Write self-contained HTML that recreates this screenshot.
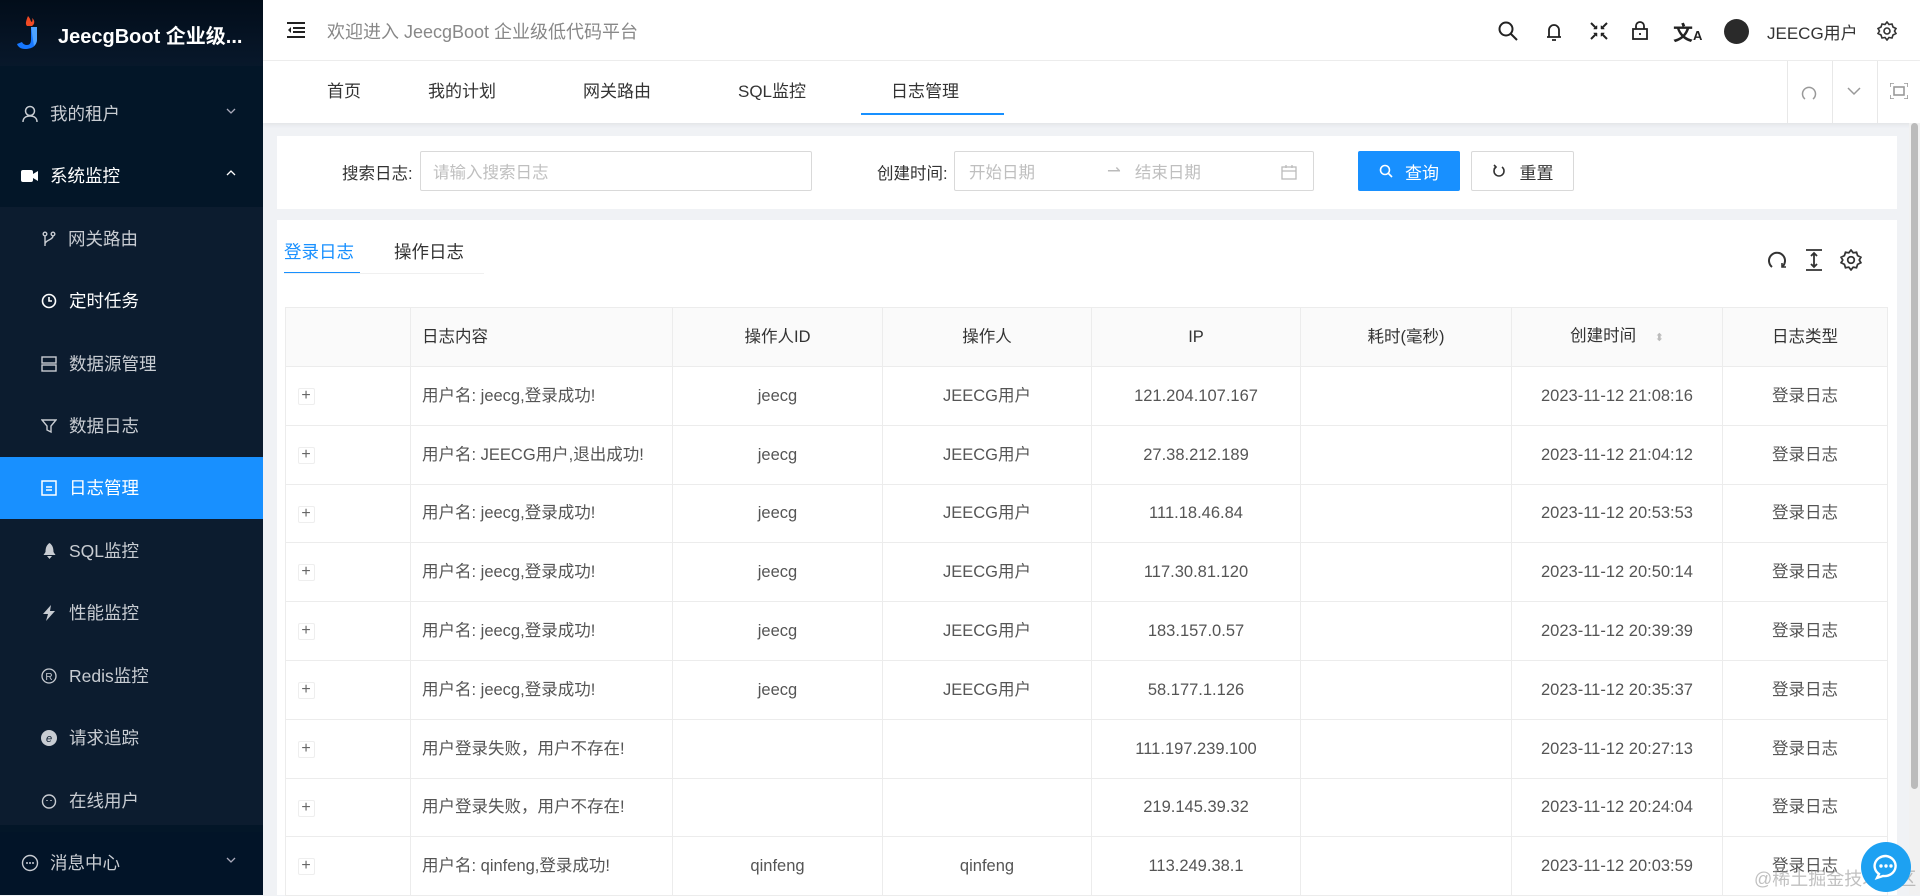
<!DOCTYPE html>
<html><head><meta charset="utf-8">
<style>
*{box-sizing:border-box;margin:0;padding:0}
body{width:1920px;height:895px;overflow:hidden;background:#f0f2f5;font-family:"Liberation Sans","Noto Sans CJK SC",sans-serif;font-size:17px;color:#333;position:relative}
.abs{position:absolute}
#side{left:0;top:0;width:263px;height:895px;background:#031628}
.logo{left:0;top:0;width:263px;height:66px;background:linear-gradient(#020d1a,#08182b)}
.mi{position:absolute;left:0;width:263px;height:62px;display:flex;align-items:center;color:#c8ccd2;font-size:17.5px;line-height:22px}
.mi svg{flex:none}
.sub{background:#0c1c2f}
.mi.act{background:#1890ff;color:#fff}
.chev{position:absolute;right:26px;top:22px}
#hdr{left:263px;top:0;width:1657px;height:61px;background:#fff;border-bottom:1px solid #eee}
#tabs{left:263px;top:61px;width:1657px;height:62px;background:#fff;box-shadow:0 2px 4px rgba(0,0,0,.06)}
.tab{position:absolute;top:20px;font-size:17px;color:#333;line-height:22px}
.card{background:#fff;position:absolute}
.inp{position:absolute;border:1px solid #d9d9d9;border-radius:2px;background:#fff;color:#bfbfbf;font-size:16.5px;display:flex;align-items:center}
table{border-collapse:collapse;position:absolute;left:285px;top:307px;width:1602px;table-layout:fixed}
td,th{border:1px solid #ececec;height:58.8px;text-align:center;font-size:16.5px;color:#555;font-weight:normal;line-height:24px;vertical-align:middle}
th{background:#fafafa;color:#333;height:59px}
td.l,th.l{text-align:left;padding-left:11px}
.plus{display:inline-block;width:17px;height:17px;border:1px solid #eee;border-radius:2px;line-height:14px;font-size:16px;color:#666;text-align:center;margin-left:-84px;vertical-align:middle}
</style></head><body>
<div id="side" class="abs">
 <div class="abs logo">
  <svg class="abs" style="left:16px;top:14px" width="24" height="36" viewBox="0 0 24 36"><path d="M12 2c3 3 2 5 4 6 1-2 0-4 0-4 3 2 3 6 0 8h-5c-2-2-1-5 1-10z" fill="#f04a24"/><path d="M15 13h6v12c0 7-5 10-12 10-4 0-7-2-8-5l5-2c1 2 3 3 5 3 3 0 4-2 4-6z" fill="#1677ff"/><path d="M15 13h6v12c0 3-1 5-3 7z" fill="#4ea3ff"/></svg>
  <div class="abs" style="left:58px;top:20px;color:#fff;font-size:20px;font-weight:bold;white-space:nowrap">JeecgBoot 企业级...</div>
 </div>
 <div class="mi" style="top:83px"><svg style="margin-left:22px" width="16" height="18" viewBox="0 0 16 18" fill="none" stroke="#c8ccd2" stroke-width="1.5"><circle cx="8" cy="6" r="4.5"/><path d="M1 17c0-4 3-6 7-6s7 2 7 6"/></svg><span style="margin-left:12px">我的租户</span><svg class="chev" width="12" height="12" viewBox="0 0 12 12"><path d="M2 4l4 4 4-4" fill="none" stroke="#aab" stroke-width="1.3"/></svg></div>
 <div class="mi" style="top:145px;color:#fff"><svg style="margin-left:21px" width="18" height="16" viewBox="0 0 18 16"><rect x="0" y="2" width="12" height="12" rx="2" fill="#fff"/><path d="M12 6l5-3v10l-5-3z" fill="#fff"/></svg><span style="margin-left:11px">系统监控</span><svg class="chev" width="12" height="12" viewBox="0 0 12 12"><path d="M2 8l4-4 4 4" fill="none" stroke="#fff" stroke-width="1.3"/></svg></div>
 <div class="abs sub" style="left:0;top:207px;width:263px;height:618px"></div>
 <div class="mi" style="top:208px"><svg style="margin-left:42px" width="14" height="16" viewBox="0 0 14 16" fill="none" stroke="#c8ccd2" stroke-width="1.4"><circle cx="3" cy="3" r="1.8"/><circle cx="11" cy="3" r="1.8"/><path d="M3 5v10M11 5c0 4-8 4-8 8"/></svg><span style="margin-left:12px">网关路由</span></div>
 <div class="mi" style="top:270px;color:#fff"><svg style="margin-left:41px" width="16" height="16" viewBox="0 0 16 16" fill="none" stroke="#fff" stroke-width="1.6"><circle cx="8" cy="8" r="6.5"/><path d="M8 4v4h3"/></svg><span style="margin-left:12px">定时任务</span></div>
 <div class="mi" style="top:333px"><svg style="margin-left:41px" width="16" height="16" viewBox="0 0 16 16" fill="none" stroke="#c8ccd2" stroke-width="1.4"><rect x="1" y="1" width="14" height="6"/><rect x="1" y="9" width="14" height="6"/></svg><span style="margin-left:12px">数据源管理</span></div>
 <div class="mi" style="top:395px"><svg style="margin-left:41px" width="16" height="16" viewBox="0 0 16 16" fill="none" stroke="#c8ccd2" stroke-width="1.4"><path d="M1 2h14l-5 6v6l-4-2V8z"/></svg><span style="margin-left:12px">数据日志</span></div>
 <div class="mi act" style="top:457px"><svg style="margin-left:41px" width="16" height="16" viewBox="0 0 16 16" fill="none" stroke="#fff" stroke-width="1.5"><rect x="1" y="1" width="14" height="14"/><path d="M5 7h6M5 10h6"/></svg><span style="margin-left:12px">日志管理</span></div>
 <div class="mi" style="top:520px"><svg style="margin-left:42px" width="15" height="16" viewBox="0 0 15 16"><path d="M7.5 0c3 2 4 5 4 9l2 3H1.5l2-3c0-4 1-7 4-9z M5 13h5l-2.5 3z" fill="#c8ccd2"/></svg><span style="margin-left:12px">SQL监控</span></div>
 <div class="mi" style="top:582px"><svg style="margin-left:42px" width="14" height="16" viewBox="0 0 14 16"><path d="M9 0L1 9h5l-2 7 9-10H8z" fill="#c8ccd2"/></svg><span style="margin-left:13px">性能监控</span></div>
 <div class="mi" style="top:645px"><svg style="margin-left:41px" width="16" height="16" viewBox="0 0 16 16"><circle cx="8" cy="8" r="7" fill="none" stroke="#c8ccd2" stroke-width="1.3"/><text x="8" y="12" font-size="10" text-anchor="middle" fill="#c8ccd2" font-family="Liberation Sans">R</text></svg><span style="margin-left:12px">Redis监控</span></div>
 <div class="mi" style="top:707px"><svg style="margin-left:41px" width="16" height="16" viewBox="0 0 16 16"><circle cx="8" cy="8" r="8" fill="#c8ccd2"/><text x="8" y="12" font-size="11" text-anchor="middle" fill="#0c1c2f" font-style="italic" font-family="Liberation Sans">e</text></svg><span style="margin-left:12px">请求追踪</span></div>
 <div class="mi" style="top:770px"><svg style="margin-left:41px" width="16" height="16" viewBox="0 0 16 16" fill="none" stroke="#c8ccd2" stroke-width="1.4"><circle cx="8" cy="8.5" r="6.5"/><path d="M6 7v1M10 7v1"/></svg><span style="margin-left:12px">在线用户</span></div>
 <div class="mi" style="top:832px;background:#021428"><svg style="margin-left:21px" width="18" height="18" viewBox="0 0 18 18"><circle cx="9" cy="9" r="7.5" fill="none" stroke="#c8ccd2" stroke-width="1.4"/><circle cx="6" cy="9" r="1" fill="#c8ccd2"/><circle cx="9" cy="9" r="1" fill="#c8ccd2"/><circle cx="12" cy="9" r="1" fill="#c8ccd2"/></svg><span style="margin-left:11px">消息中心</span><svg class="chev" width="12" height="12" viewBox="0 0 12 12"><path d="M2 4l4 4 4-4" fill="none" stroke="#aab" stroke-width="1.3"/></svg></div>
</div>

<div id="hdr" class="abs">
 <svg class="abs" style="left:24px;top:22px" width="18" height="16" viewBox="0 0 18 16" stroke="#222" stroke-width="2"><path d="M0 1h18M6 6h12M6 10h12M0 15h18"/><path d="M4 5l-3 3 3 3z" fill="#222" stroke="none"/></svg>
 <div class="abs" style="left:64px;top:18px;font-size:18px;color:#888">欢迎进入 JeecgBoot 企业级低代码平台</div>
 <svg class="abs" style="left:1235px;top:21px" width="20" height="20" viewBox="0 0 20 20" fill="none" stroke="#222" stroke-width="2"><circle cx="8" cy="8" r="6.5"/><path d="M13 13l6 6"/></svg>
 <svg class="abs" style="left:1283px;top:22px" width="16" height="20" viewBox="0 0 16 20" fill="none" stroke="#222" stroke-width="1.8"><path d="M3 15V8a5 5 0 0110 0v7zM1 15h14M6 18h4"/></svg>
 <svg class="abs" style="left:1327px;top:22px" width="18" height="18" viewBox="0 0 18 18" fill="#222" stroke="#222" stroke-width="2"><path d="M1 1l5 5M17 1l-5 5M1 17l5-5M17 17l-5-5" fill="none"/><path d="M7 7H3.5L7 3.5zM11 7h3.5L11 3.5zM7 11H3.5L7 14.5zM11 11h3.5L11 14.5z" stroke-width="0.5"/></svg>
 <svg class="abs" style="left:1369px;top:21px" width="16" height="19" viewBox="0 0 16 19" fill="none" stroke="#222" stroke-width="1.8"><rect x="1" y="8" width="14" height="10"/><path d="M4 8V5a4 4 0 018 0v3M8 12v2"/></svg>
 <div class="abs" style="left:1410px;top:17px;font-size:20px;font-weight:bold;color:#222">文<span style="font-size:13px">A</span></div>
 <div class="abs" style="left:1461px;top:19px;width:25px;height:25px;border-radius:50%;background:#2a2a2a"></div>
 <div class="abs" style="left:1504px;top:19px;font-size:17px;color:#333">JEECG用户</div>
 <svg class="abs" style="left:1614px;top:21px" width="20" height="20" viewBox="0 0 20 20" fill="none" stroke="#333" stroke-width="1.6"><circle cx="10" cy="10" r="3"/><path d="M10 1l2 2.5 3-.5 1 3 3 1.5-1.5 2.5 1.5 2.5-3 1.5-1 3-3-.5L10 19l-2-2.5-3 .5-1-3-3-1.5L2.5 10 1 7.5 4 6l1-3 3 .5z"/></svg>
</div>

<div id="tabs" class="abs">
 <div class="tab" style="left:64px">首页</div>
 <div class="tab" style="left:165px">我的计划</div>
 <div class="tab" style="left:320px">网关路由</div>
 <div class="tab" style="left:475px">SQL监控</div>
 <div class="tab" style="left:628px">日志管理</div>
 <div class="abs" style="left:598px;top:52px;width:143px;height:2px;background:#1890ff"></div>
 <div class="abs" style="left:1524px;top:0;width:1px;height:62px;background:#e8e8e8"></div>
 <div class="abs" style="left:1569px;top:0;width:1px;height:62px;background:#e8e8e8"></div>
 <div class="abs" style="left:1614px;top:0;width:1px;height:62px;background:#e8e8e8"></div>
 <svg class="abs" style="left:1538px;top:24px" width="16" height="16" viewBox="0 0 16 16" fill="none" stroke="#999" stroke-width="1.5"><path d="M4 14A6.5 6.5 0 1112 14"/></svg>
 <svg class="abs" style="left:1584px;top:25px" width="14" height="10" viewBox="0 0 14 10" fill="none" stroke="#999" stroke-width="1.5"><path d="M1 2l6 6 6-6"/></svg>
 <svg class="abs" style="left:1627px;top:22px" width="18" height="16" viewBox="0 0 18 16" fill="none" stroke="#999" stroke-width="1.6"><rect x="4" y="4" width="10" height="8"/><path d="M0 4V0h4M14 0h4v4M18 12v4h-4M4 16H0v-4"/></svg>
</div>
<div class="abs" style="left:1909px;top:123px;width:11px;height:772px;background:#f1f1f1"></div>
<div class="abs" style="left:1911px;top:123px;width:7px;height:666px;background:#bbb;border-radius:4px"></div>

<div class="card" style="left:277px;top:136px;width:1620px;height:73px">
 <div class="abs" style="left:65px;top:24px;font-size:16.5px">搜索日志:</div>
 <div class="inp" style="left:143px;top:15px;width:392px;height:40px;padding-left:12px">请输入搜索日志</div>
 <div class="abs" style="left:600px;top:24px;font-size:16.5px">创建时间:</div>
 <div class="inp" style="left:677px;top:15px;width:360px;height:40px;padding-left:14px">开始日期<span style="margin-left:72px;color:#bbb">⇀</span><span style="margin-left:14px">结束日期</span>
  <svg style="position:absolute;right:16px;top:12px" width="16" height="16" viewBox="0 0 16 16" fill="none" stroke="#bbb" stroke-width="1.3"><rect x="1" y="3" width="14" height="12"/><path d="M1 7h14M5 1v3M11 1v3"/></svg></div>
 <div class="abs" style="left:1081px;top:15px;width:102px;height:40px;background:#1890ff;border-radius:2px;color:#fff;font-size:17px;display:flex;align-items:center;justify-content:center"><svg width="14" height="14" viewBox="0 0 14 14" fill="none" stroke="#fff" stroke-width="1.6"><circle cx="6" cy="6" r="4.5"/><path d="M9.5 9.5l3.5 3.5"/></svg><span style="margin-left:12px">查询</span></div>
 <div class="abs" style="left:1194px;top:15px;width:103px;height:40px;border:1px solid #d9d9d9;border-radius:2px;font-size:17px;display:flex;align-items:center;justify-content:center"><svg width="14" height="14" viewBox="0 0 14 14" fill="none" stroke="#333" stroke-width="1.6"><path d="M4 3A5 5 0 1010 3"/><path d="M2 1l2 2-2 2" /></svg><span style="margin-left:14px">重置</span></div>
</div>

<div class="card" style="left:277px;top:220px;width:1620px;height:675px">
 <div class="abs" style="left:7px;top:19px;color:#1890ff;font-size:17.5px">登录日志</div>
 <div class="abs" style="left:117px;top:19px;color:#333;font-size:17.5px">操作日志</div>
 <div class="abs" style="left:7px;top:52px;width:76px;height:2px;background:#1890ff"></div>
 <div class="abs" style="left:7px;top:53px;width:200px;height:1px;background:#f0f0f0"></div>
 <svg class="abs" style="left:1490px;top:30px" width="20" height="20" viewBox="0 0 20 20" fill="none" stroke="#333" stroke-width="2"><path d="M5 17A8 8 0 1115 17"/><path d="M15 13v4h4" stroke-width="1.6"/></svg>
 <svg class="abs" style="left:1528px;top:29px" width="18" height="22" viewBox="0 0 18 22" fill="none" stroke="#333" stroke-width="1.8"><path d="M1 1h16M1 21h16M9 4v14M6 7l3-3 3 3M6 15l3 3 3-3"/></svg>
 <svg class="abs" style="left:1563px;top:29px" width="22" height="22" viewBox="0 0 20 20" fill="none" stroke="#333" stroke-width="1.6"><circle cx="10" cy="10" r="3"/><path d="M10 1l2 2.5 3-.5 1 3 3 1.5-1.5 2.5 1.5 2.5-3 1.5-1 3-3-.5L10 19l-2-2.5-3 .5-1-3-3-1.5L2.5 10 1 7.5 4 6l1-3 3 .5z"/></svg>
</div>

<table>
<colgroup><col style="width:125px"><col style="width:262px"><col style="width:210px"><col style="width:209px"><col style="width:209px"><col style="width:211px"><col style="width:211px"><col style="width:165px"></colgroup>
<tr><th></th><th class="l">日志内容</th><th>操作人ID</th><th>操作人</th><th>IP</th><th>耗时(毫秒)</th><th>创建时间 <span style="color:#bbb;font-size:11px;margin-left:14px">⬍</span></th><th>日志类型</th></tr>
<tr><td><span class="plus">+</span></td><td class="l">用户名: jeecg,登录成功!</td><td>jeecg</td><td>JEECG用户</td><td>121.204.107.167</td><td></td><td>2023-11-12 21:08:16</td><td>登录日志</td></tr>
<tr><td><span class="plus">+</span></td><td class="l">用户名: JEECG用户,退出成功!</td><td>jeecg</td><td>JEECG用户</td><td>27.38.212.189</td><td></td><td>2023-11-12 21:04:12</td><td>登录日志</td></tr>
<tr><td><span class="plus">+</span></td><td class="l">用户名: jeecg,登录成功!</td><td>jeecg</td><td>JEECG用户</td><td>111.18.46.84</td><td></td><td>2023-11-12 20:53:53</td><td>登录日志</td></tr>
<tr><td><span class="plus">+</span></td><td class="l">用户名: jeecg,登录成功!</td><td>jeecg</td><td>JEECG用户</td><td>117.30.81.120</td><td></td><td>2023-11-12 20:50:14</td><td>登录日志</td></tr>
<tr><td><span class="plus">+</span></td><td class="l">用户名: jeecg,登录成功!</td><td>jeecg</td><td>JEECG用户</td><td>183.157.0.57</td><td></td><td>2023-11-12 20:39:39</td><td>登录日志</td></tr>
<tr><td><span class="plus">+</span></td><td class="l">用户名: jeecg,登录成功!</td><td>jeecg</td><td>JEECG用户</td><td>58.177.1.126</td><td></td><td>2023-11-12 20:35:37</td><td>登录日志</td></tr>
<tr><td><span class="plus">+</span></td><td class="l">用户登录失败，用户不存在!</td><td></td><td></td><td>111.197.239.100</td><td></td><td>2023-11-12 20:27:13</td><td>登录日志</td></tr>
<tr><td><span class="plus">+</span></td><td class="l">用户登录失败，用户不存在!</td><td></td><td></td><td>219.145.39.32</td><td></td><td>2023-11-12 20:24:04</td><td>登录日志</td></tr>
<tr><td><span class="plus">+</span></td><td class="l">用户名: qinfeng,登录成功!</td><td>qinfeng</td><td>qinfeng</td><td>113.249.38.1</td><td></td><td>2023-11-12 20:03:59</td><td>登录日志</td></tr>
</table>

<div class="abs" style="left:1754px;top:865px;font-size:18px;color:rgba(150,150,150,.6);white-space:nowrap">@稀土掘金技术社区</div>
<div class="abs" style="left:1861px;top:842px;width:50px;height:50px;border-radius:50%;background:#1da1f2"><svg style="position:absolute;left:11px;top:11px" width="28" height="28" viewBox="0 0 28 28"><path d="M14 3a11 10 0 00-7 18l-2 4 6-2a11 10 0 103-20z" fill="none" stroke="#fff" stroke-width="2.4"/><circle cx="9" cy="13" r="1.7" fill="#fff"/><circle cx="14" cy="13" r="1.7" fill="#fff"/><circle cx="19" cy="13" r="1.7" fill="#fff"/></svg></div>
</body></html>
